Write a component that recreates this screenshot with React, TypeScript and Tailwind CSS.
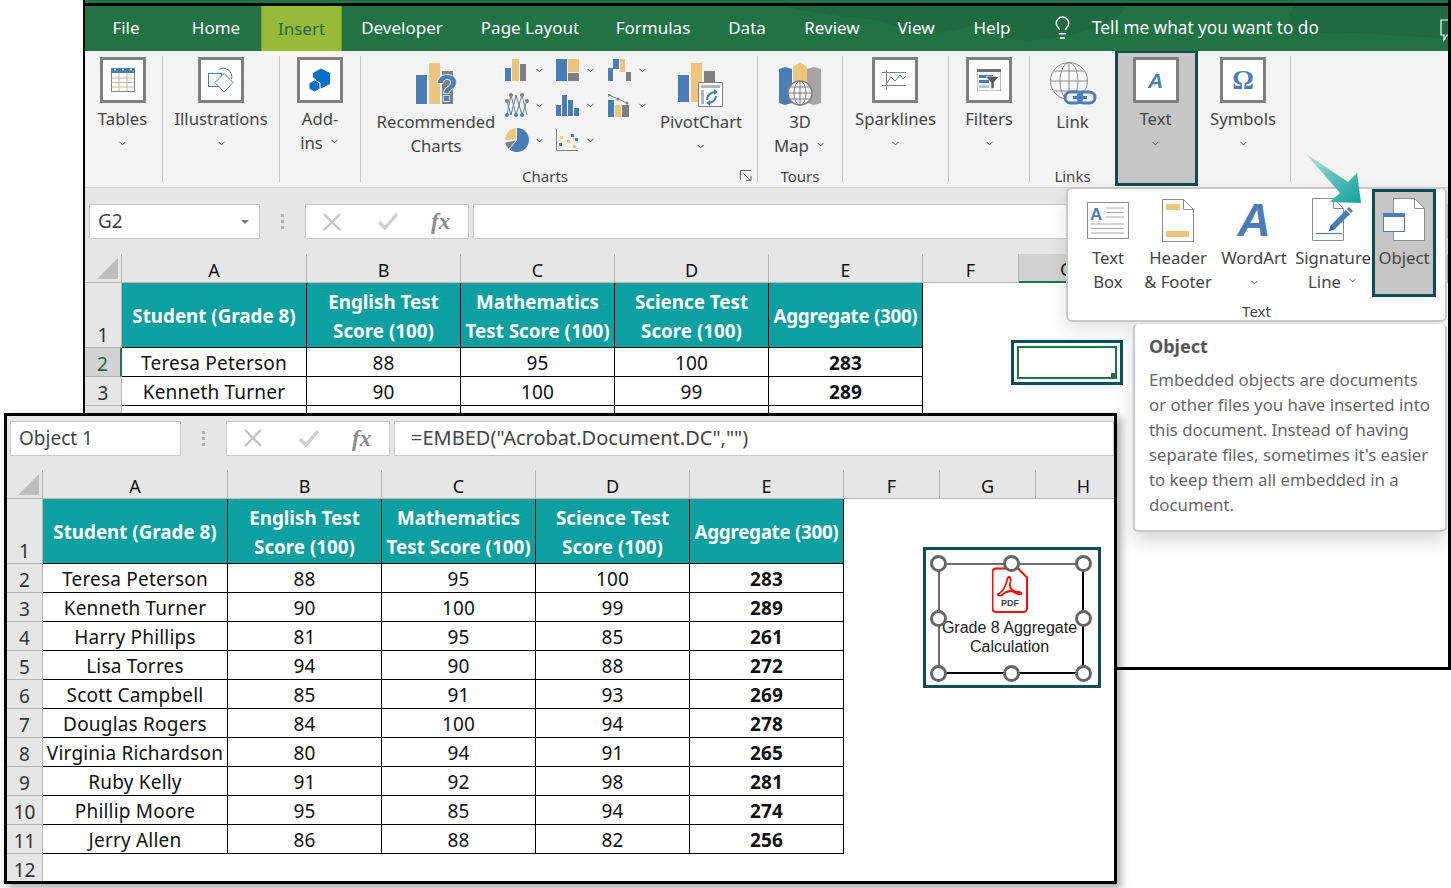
import React from 'react';
import { ChevronDown, Lightbulb } from 'lucide-react';

const BLUE = '#4a7db5';
const TAN = '#ecc57f';
const GREY = '#7f7f7f';

const students = [
  ['Teresa Peterson', '88', '95', '100', '283'],
  ['Kenneth Turner', '90', '100', '99', '289'],
  ['Harry Phillips', '81', '95', '85', '261'],
  ['Lisa Torres', '94', '90', '88', '272'],
  ['Scott Campbell', '85', '91', '93', '269'],
  ['Douglas Rogers', '84', '100', '94', '278'],
  ['Virginia Richardson', '80', '94', '91', '265'],
  ['Ruby Kelly', '91', '92', '98', '281'],
  ['Phillip Moore', '95', '85', '94', '274'],
  ['Jerry Allen', '86', '88', '82', '256'],
];

const blankRow = ['', '', '', '', ''];

const tabs = [
  { label: 'File', cls: 'w-[82px]' },
  { label: 'Home', cls: 'w-[94px] pl-[4px]' },
  { label: 'Insert', cls: 'w-[81px] h-[46px] bg-[#99ba38] border border-[#7f9e35] border-b-0 !text-[#1d6b3d]' },
  { label: 'Developer', cls: 'w-[120px]' },
  { label: 'Page Layout', cls: 'w-[136px]' },
  { label: 'Formulas', cls: 'w-[110px]' },
  { label: 'Data', cls: 'w-[78px]' },
  { label: 'Review', cls: 'w-[92px]' },
  { label: 'View', cls: 'w-[76px]' },
  { label: 'Help', cls: 'w-[76px]' },
];

/* small helpers */
const Chev = ({ className = '' }: { className?: string }) => (
  <ChevronDown size={11} strokeWidth={2} className={`inline-block text-[#444] ${className}`} />
);

const IconBox = ({ children }: { children: React.ReactNode }) => (
  <div className="flex h-[46px] w-[46px] shrink-0 items-center justify-center border-[3px] border-[#808080] bg-white">
    {children}
  </div>
);

const Sep = () => <div className="my-[5px] w-px shrink-0 bg-[#c4c4c4]" />;

const GroupLabel = ({ children, className = '' }: { children: React.ReactNode; className?: string }) => (
  <div className={`mt-auto h-[21px] text-center text-[15px] leading-[20px] text-[#444] ${className}`}>{children}</div>
);

/* icons */
const TableIcon = () => (
  <svg width="26" height="26" viewBox="0 0 26 26">
    <rect x="1.5" y="1.5" width="23" height="23" fill="#fff" stroke="#808080" />
    <rect x="1" y="1" width="24" height="5" fill={BLUE} />
    <path d="M1.5 11h23M1.5 15.500h23M1.500 20h23M9 6v18M17 6v18" stroke="#c4b9a6" strokeWidth="1" />
    <path d="M4 2.500h2M12 2.500h2M20 2.500h2" stroke="#fff" strokeWidth="1.500" />
  </svg>
);

const ShapesIcon = () => (
  <svg width="28" height="28" viewBox="0 0 28 28" fill="none" stroke={BLUE} strokeWidth="1">
    <rect x="1.500" y="7.500" width="13" height="13" fill="#fff" />
    <path d="M12 3.500a8.500 8.500 0 0 1 12.500 9.500" />
    <path d="M17 7.500 26 16.500 17 26 8 16.500z" fill="#fff" />
  </svg>
);

const AddinIcon = () => (
  <svg width="24" height="26" viewBox="0 0 24 26">
    <path d="M13 1.500 22 6v11l-9 4.500-5-2.500V12L5 10.500V6z" fill="#0a6fc9" />
    <path d="M6.500 13 12 16v6l-5.500 3L1 22v-6z" fill="#0a6fc9" stroke="#fff" strokeWidth="1" />
  </svg>
);

const RecommendedIcon = () => (
  <svg className="ml-[5px]" width="46" height="48" viewBox="0 0 46 48">
    <rect x="0" y="13" width="11" height="29" fill={BLUE} />
    <rect x="13" y="1" width="11" height="41" fill={TAN} />
    <rect x="26" y="9" width="11" height="33" fill={GREY} />
    <text x="20" y="39" fontFamily="'Liberation Sans', sans-serif" fontWeight="700" fontSize="36" fill={BLUE} stroke="#f3f3f3" strokeWidth="1.500" paintOrder="stroke">?</text>
  </svg>
);

const ColsIcon = () => (
  <svg width="21" height="22" viewBox="0 0 21 22">
    <rect x="0" y="9" width="6" height="13" fill={BLUE} />
    <rect x="7" y="0" width="7" height="22" fill={TAN} />
    <rect x="15" y="5" width="6" height="17" fill={GREY} />
  </svg>
);
const TreeIcon = () => (
  <svg width="23" height="22" viewBox="0 0 23 22">
    <rect x="0" y="0" width="11" height="22" fill={BLUE} />
    <rect x="12" y="0" width="11" height="13" fill={TAN} />
    <rect x="12" y="14" width="11" height="8" fill={GREY} />
  </svg>
);
const WaterfallIcon = () => (
  <svg width="23" height="22" viewBox="0 0 23 22">
    <path d="M0 9h5V22H0z" fill={BLUE} />
    <rect x="5" y="0" width="6" height="10" fill={BLUE} />
    <rect x="12" y="0" width="5" height="13" fill={TAN} />
    <rect x="18" y="13" width="5" height="9" fill={GREY} />
  </svg>
);
const BoxIcon = () => (
  <svg width="24" height="24" viewBox="0 0 24 24" fill="none">
    <path d="M2 8 6 22 11 2 17 22 22 8" stroke={BLUE} strokeWidth="1" />
    <path d="M2 22 6 2 11 22 17 2 22 22" stroke={GREY} strokeWidth="1" />
    <g fill={BLUE}>
      <circle cx="2" cy="22" r="2" /><circle cx="11" cy="22" r="2" /><circle cx="17" cy="22" r="2" />
    </g>
    <g fill={GREY}>
      <circle cx="2" cy="8" r="2" /><circle cx="6" cy="2" r="2" /><circle cx="17" cy="2" r="2" /><circle cx="22" cy="8" r="2" />
    </g>
  </svg>
);
const HistoIcon = () => (
  <svg width="23" height="21" viewBox="0 0 23 21" fill={BLUE}>
    <rect x="0" y="10" width="5" height="11" />
    <rect x="6" y="0" width="5" height="21" />
    <rect x="12" y="5" width="5" height="16" />
    <rect x="18" y="13" width="5" height="8" />
  </svg>
);
const ComboIcon = () => (
  <svg width="21" height="23" viewBox="0 0 21 23">
    <rect x="0" y="6" width="6" height="17" fill={BLUE} />
    <rect x="7" y="11" width="6" height="12" fill={TAN} />
    <rect x="14" y="11" width="7" height="12" fill={GREY} />
    <path d="M1 1 10 5 19 9" stroke={GREY} strokeWidth="1" fill="none" />
    <circle cx="1" cy="1" r="1.500" fill={GREY} /><circle cx="10" cy="5" r="1.500" fill={GREY} /><circle cx="19" cy="9" r="1.500" fill={GREY} />
  </svg>
);
const PieIcon = () => (
  <svg width="24" height="24" viewBox="0 0 24 24">
    <path d="M12 0a12 12 0 1 1-7.500 21.400L12 12z" fill={BLUE} />
    <path d="M3.800 20.700A12 12 0 0 1 .2 14.500L11 12.500z" fill={GREY} />
    <path d="M0 12A12 12 0 0 1 11 0v11z" fill={TAN} />
  </svg>
);
const ScatterIcon = () => (
  <svg width="22" height="22" viewBox="0 0 22 22">
    <path d="M.5 0v21.500H22" stroke={GREY} fill="none" />
    <g fill={BLUE}><rect x="3" y="14" width="3" height="3" /><rect x="15" y="5" width="3" height="3" /><rect x="19" y="9" width="3" height="3" /></g>
    <g fill={TAN}><rect x="4" y="7" width="3" height="3" /><rect x="11" y="11" width="3" height="3" /><rect x="17" y="16" width="3" height="3" /></g>
  </svg>
);

const PivotChartIcon = () => (
  <svg width="46" height="46" viewBox="0 0 46 46">
    <rect x="0" y="13" width="11" height="27" fill={BLUE} />
    <rect x="13" y="1" width="11" height="39" fill={TAN} />
    <rect x="26" y="9" width="11" height="31" fill={GREY} />
    <rect x="20.500" y="20.500" width="24" height="24" fill="#fff" stroke={GREY} />
    <rect x="23" y="23" width="19" height="3" fill="#b5b5b5" />
    <rect x="23" y="28" width="3" height="14" fill="#b5b5b5" />
    <path d="M29 38c0-5 4-8 9-8M38 34c0 4-4 7-8 7" stroke={BLUE} strokeWidth="2" fill="none" />
    <path d="M36 27l4 3-4 3zM32 38l-4 3 4 3z" fill={BLUE} />
  </svg>
);

const MapIcon = () => (
  <svg width="42" height="44" viewBox="0 0 42 44">
    <path d="M0 7 6 5 13 7V41L6 43 0 41z" fill={BLUE} />
    <path d="M14 5 21 0 28 5V32H14z" fill={TAN} />
    <path d="M28 7 35 5 42 7V41L35 43 28 41z" fill="#a5a5a5" />
    <circle cx="21" cy="31" r="12" fill="#f3f3f3" stroke={GREY} strokeWidth="1.500" />
    <path d="M9 31h24M11 25h20M11 37h20M21 19v24" stroke={GREY} />
    <ellipse cx="21" cy="31" rx="6" ry="12" fill="none" stroke={GREY} />
  </svg>
);

const SparkIcon = () => (
  <svg width="26" height="20" viewBox="0 0 26 20" fill="none">
    <path d="M0 2.500h24M0 15.500h24M4.500 0v20" stroke="#7f7f7f" />
    <path d="M5 13 9 7 13 11 18 5 21 9 24 6" stroke={BLUE} />
  </svg>
);

const FilterIcon = () => (
  <svg width="24" height="22" viewBox="0 0 24 22">
    <rect x="0" y="0" width="24" height="22" fill="#fff" stroke="#808080" />
    <rect x="0" y="0" width="24" height="3" fill="#6f6f6f" />
    <rect x="2" y="6" width="14" height="3" fill={BLUE} />
    <rect x="2" y="11" width="10" height="3" fill={BLUE} />
    <rect x="2" y="16" width="10" height="3" fill="#b5c8e0" />
    <path d="M9 7.500h13l-5 6v6h-3v-6z" fill="#595959" stroke="#fff" strokeWidth=".5" />
  </svg>
);

const LinkIcon = () => (
  <svg width="48" height="46" viewBox="0 0 48 46" fill="none">
    <circle cx="20" cy="20" r="18.500" stroke="#8c8c8c" fill="#f7f7f7" />
    <ellipse cx="20" cy="20" rx="9" ry="18.500" stroke="#8c8c8c" />
    <path d="M20 1.500v37M2 20h36M5 10h30M5 30h30" stroke="#8c8c8c" />
    <rect x="16" y="31" width="17" height="11" rx="5.500" stroke={BLUE} strokeWidth="3" fill="#f3f3f3" />
    <rect x="29" y="31" width="17" height="11" rx="5.500" stroke={BLUE} strokeWidth="3" fill="none" />
    <path d="M24 36.500h14" stroke={BLUE} strokeWidth="3" />
  </svg>
);

const OmegaIcon = () => (
  <span className="font-['Liberation_Serif',serif] text-[27px] font-bold leading-none text-[#4a7db5]">Ω</span>
);

const TextBoxIcon = () => (
  <svg width="42" height="37" viewBox="0 0 42 37">
    <rect x=".5" y=".5" width="41" height="36" fill="#fff" stroke="#8c8c8c" />
    <text x="3" y="18" fontFamily="'Liberation Sans', sans-serif" fontWeight="700" fontSize="17" fill={BLUE}>A</text>
    <path d="M19 6h18M19 10.500h18M19 15h18M4 22h33M4 26.500h33M4 31h33" stroke="#a8a8a8" />
  </svg>
);

const HeaderFooterIcon = () => (
  <svg width="32" height="43" viewBox="0 0 32 43">
    <path d="M.5.5h21l10 10v32H.5z" fill="#fff" stroke="#8c8c8c" />
    <path d="M21.500.5v10h10" fill="none" stroke="#8c8c8c" />
    <rect x="4" y="5" width="14" height="6" fill={TAN} />
    <rect x="4" y="32" width="23" height="6" fill={TAN} />
  </svg>
);

const SignatureIcon = () => (
  <svg width="42" height="44" viewBox="0 0 42 44">
    <path d="M.5.5h21l10 10v32H.5z" fill="#fff" stroke="#8c8c8c" />
    <path d="M21.500.5v10h10" fill="none" stroke="#8c8c8c" />
    <path d="M4 35.500h26" stroke={BLUE} strokeWidth="1.200" />
    <path d="M17 33 19 27 34 12 38 16 23 31z" fill={BLUE} />
    <path d="M35 11 37 9 41 13 39 15z" fill={BLUE} />
    <path d="M17 33 19 27 23 31z" fill="#2f5f94" />
  </svg>
);

const ObjectIcon = () => (
  <svg width="42" height="44" viewBox="0 0 42 44">
    <path d="M10.500.5h21l10 10v32h-31z" fill="#fff" stroke="#8c8c8c" />
    <path d="M31.500.5v10h10" fill="none" stroke="#8c8c8c" />
    <rect x=".5" y="15.500" width="21" height="18" fill="#fff" stroke={BLUE} />
    <rect x="0" y="15" width="22" height="4" fill={BLUE} />
  </svg>
);

const PdfIcon = () => (
  <svg width="36" height="46" viewBox="0 0 36 46">
    <path d="M4 1h22l9 9v31a3.500 3.500 0 0 1-3.500 3.500H4A3.500 3.500 0 0 1 .5 41V4.500A3.500 3.500 0 0 1 4 1z" fill="#fff" stroke="#f40f02" strokeWidth="2" transform="translate(0 .5)" />
    <path d="M6 27c3-1 6-5 8-10 1-3 1-7 3-7s2 4 1 7c-1 4 3 8 8 8 3 0 4 1 3 2-2 1-6-1-9-3-4 0-8 2-10 4-2 1-5 1-4-1z" fill="none" stroke="#f40f02" strokeWidth="1.800" />
    <text x="18" y="39" textAnchor="middle" fontFamily="'Liberation Sans', sans-serif" fontWeight="700" fontSize="9" fill="#444">PDF</text>
  </svg>
);

const Handle = ({ className }: { className: string }) => (
  <div className={`absolute h-[17px] w-[17px] rounded-full border-[3px] border-[#666] bg-white ${className}`} />
);

/* ribbon pieces */
const Stacked = ({ lines, chev, className = '' }: { lines: string[]; chev?: 'below' | 'inline'; className?: string }) => (
  <div className={`text-center text-[16.700px] leading-[24px] text-[#444] ${className}`}>
    {lines.map((l, i) => (
      <div key={l} className="whitespace-nowrap">
        {l}
        {chev === 'inline' && i === lines.length - 1 && <Chev className="ml-[6px] align-[2px]" />}
      </div>
    ))}
    {chev === 'below' && (
      <div className="flex h-[24px] items-center justify-center">
        <Chev />
      </div>
    )}
  </div>
);

const BoxButton = ({ icon, lines, chev = 'below' }: { icon: React.ReactNode; lines: string[]; chev?: 'below' | 'inline' }) => (
  <div className="flex flex-col items-center pt-[6px]">
    <IconBox>{icon}</IconBox>
    <Stacked lines={lines} chev={chev} className="mt-[4px]" />
  </div>
);

const GalleryCell = ({ icon }: { icon: React.ReactNode }) => (
  <div className="flex h-[34px] items-center">
    <div className="flex w-[29px] justify-start">{icon}</div>
    <Chev />
  </div>
);

const Ribbon = () => (
  <div className="flex h-[137px] shrink-0 border-b border-[#d2d2d2] bg-[#f3f3f3]">
    <div className="flex w-[77px] shrink-0 justify-center pr-[2px]"><BoxButton icon={<TableIcon />} lines={['Tables']} /></div>
    <Sep />
    <div className="flex w-[116px] shrink-0 justify-center"><BoxButton icon={<ShapesIcon />} lines={['Illustrations']} /></div>
    <Sep />
    <div className="flex w-[80px] shrink-0 justify-center"><BoxButton icon={<AddinIcon />} lines={['Add-', 'ins']} chev="inline" /></div>
    <Sep />
    {/* charts group */}
    <div className="relative flex w-[396px] shrink-0 flex-col">
      <div className="flex">
        <div className="flex w-[144px] shrink-0 flex-col items-center pt-[11px] pl-[6px]">
          <RecommendedIcon />
          <Stacked lines={['Recommended', 'Charts']} />
        </div>
        <div className="grid w-[154px] shrink-0 grid-cols-3 pt-[2px]">
          <GalleryCell icon={<ColsIcon />} />
          <GalleryCell icon={<TreeIcon />} />
          <GalleryCell icon={<WaterfallIcon />} />
          <GalleryCell icon={<BoxIcon />} />
          <GalleryCell icon={<HistoIcon />} />
          <GalleryCell icon={<ComboIcon />} />
          <GalleryCell icon={<PieIcon />} />
          <GalleryCell icon={<ScatterIcon />} />
        </div>
        <div className="flex flex-1 flex-col items-center pt-[11px] pr-[14px]">
          <PivotChartIcon />
          <Stacked lines={['PivotChart']} chev="below" className="mt-[2px]" />
        </div>
      </div>
      <GroupLabel className="pr-[28px]">Charts</GroupLabel>
      <svg className="absolute right-[5px] bottom-[6px]" width="12" height="11" viewBox="0 0 12 11" fill="none" stroke="#666">
        <path d="M.5 10V.5H11M3 3l7 7M6 10.500h5V6" />
      </svg>
    </div>
    <Sep />
    <div className="flex w-[84px] shrink-0 flex-col items-center pt-[11px]">
      <MapIcon />
      <Stacked lines={['3D', 'Map']} chev="inline" className="mt-[4px]" />
      <GroupLabel>Tours</GroupLabel>
    </div>
    <Sep />
    <div className="flex w-[105px] shrink-0 justify-center"><BoxButton icon={<SparkIcon />} lines={['Sparklines']} /></div>
    <Sep />
    <div className="flex w-[80px] shrink-0 justify-center"><BoxButton icon={<FilterIcon />} lines={['Filters']} /></div>
    <Sep />
    <div className="flex w-[85px] shrink-0 flex-col items-center pt-[10px]">
      <LinkIcon />
      <Stacked lines={['Link']} className="mt-[3px]" />
      <GroupLabel>Links</GroupLabel>
    </div>
    <div className="flex h-[135px] w-[83px] shrink-0 justify-center border-[3px] border-t-[2px] border-[#0f4c54] bg-[#c6c6c6] pr-[2px]">
      <div className="-mt-[2px]">
        <BoxButton icon={<span className="font-['Liberation_Sans',sans-serif] text-[21px] font-bold italic leading-none text-[#4a7db5]">A</span>} lines={['Text']} />
      </div>
    </div>
    <div className="flex w-[92px] shrink-0 justify-center pr-[2px]"><BoxButton icon={<OmegaIcon />} lines={['Symbols']} /></div>
    <Sep />
  </div>
);

const TabBar = () => (
  <div className="relative flex h-[45px] shrink-0 items-start overflow-hidden bg-[#217346] font-['Noto_Sans',sans-serif]">
    <svg className="absolute inset-0" width="1363" height="45" viewBox="0 0 1363 45" fill="#1f6a40">
      <path d="M700 0c40 12 90 10 110 20 30 12 60 6 80-2 30 14 40 22 90 12 40-10 60-20 60-30zM1210 0c-12 15-6 28 2 30 40-8 80 0 150 2V0z" />
    </svg>
    {tabs.map((t) => (
      <div key={t.label} className={`relative -mt-[1px] flex h-[45px] shrink-0 items-center justify-center text-[17px] text-white ${t.cls}`}>
        {t.label}
      </div>
    ))}
    <div className="relative -mt-[1px] flex h-[45px] items-center gap-[17px] pl-[20px] text-[17.200px] text-white">
      <Lightbulb size={25} strokeWidth={1.400} />
      <span>Tell me what you want to do</span>
    </div>
    <svg className="absolute top-[13px] right-0" width="8" height="23" viewBox="0 0 8 23" fill="none" stroke="#fff" strokeWidth="1.200">
      <path d="M8 1H1v15h3v5l3-5h1" />
    </svg>
  </div>
);

const FormulaBar = ({ name, formula, arrow, pad }: { name: string; formula?: string; arrow?: boolean; pad: string }) => (
  <div className={`flex h-full shrink-0 items-center bg-[#e6e6e6] ${pad}`}>
    <div className="flex h-[35px] w-[171px] shrink-0 items-center justify-between border border-[#c6c6c6] bg-white px-[8px] text-[19px] text-[#444]">
      <span>{name}</span>
      {arrow && <div className="mr-[2px] h-0 w-0 border-x-[4px] border-t-[4px] border-x-transparent border-t-[#777]" />}
    </div>
    <div className="flex w-[45px] shrink-0 flex-col items-center gap-[3px]">
      <div className="h-[3px] w-[3px] bg-[#b0b0b0]" />
      <div className="h-[3px] w-[3px] bg-[#b0b0b0]" />
      <div className="h-[3px] w-[3px] bg-[#b0b0b0]" />
    </div>
    <div className="flex h-[35px] w-[164px] shrink-0 items-center border border-[#c6c6c6] bg-white text-[#b4b4b4]">
      <svg className="ml-[17px]" width="18" height="18" viewBox="0 0 18 18" fill="none" stroke="#c4c4c4" strokeWidth="2.400"><path d="M1 1l16 16M17 1 1 17" /></svg>
      <svg className="ml-[37px]" width="20" height="17" viewBox="0 0 20 17" fill="none" stroke="#d0d0d0" strokeWidth="3.400"><path d="M1 9l6 6L19 1" /></svg>
      <span className="ml-[33px] font-['Liberation_Serif',serif] text-[23px] font-bold italic leading-none text-[#8c8c8c]">fx</span>
    </div>
    <div className="ml-[4px] flex h-[35px] min-w-0 flex-1 items-center border border-[#c6c6c6] bg-white pl-[16px] text-[20px] whitespace-nowrap text-[#444]">
      {formula}
    </div>
  </div>
);

const ColHead = ({ label, active }: { label: string; active?: boolean }) => (
  <div className={`flex h-[29px] items-end justify-center border-r border-b border-[#b4b4b4] text-[18px] leading-[24px] text-[#111] ${active ? 'border-b-2 border-b-[#217346] bg-[#d2d2d2]' : 'bg-[#e6e6e6]'}`}>
    {label}
  </div>
);

const RowHead = ({ n, active, tall }: { n?: number; active?: boolean; tall?: boolean }) => (
  <div className={`flex items-end justify-center border-r border-b border-[#b4b4b4] text-[19px] leading-[23px] ${tall ? 'h-[65px]' : 'h-[29px]'} ${active ? 'border-r-2 border-r-[#217346] bg-[#d2d2d2] text-[#1d6b3d]' : 'bg-[#e6e6e6] text-[#333]'}`}>
    {n}
  </div>
);

const HeadCell = ({ lines, className = '' }: { lines: string[]; className?: string }) => (
  <div className={`flex h-[65px] flex-col items-center justify-center border-r border-b border-black bg-[#0ca0a0] pt-[3px] text-[18.800px] font-bold leading-[29px] whitespace-nowrap text-white ${className}`}>
    {lines.map((l) => (
      <div key={l}>{l}</div>
    ))}
  </div>
);

const Sheet = ({ cols, rows, letters, activeCol, activeRow, extraRow }: { cols: string; rows: string[][]; letters: string[]; activeCol?: string; activeRow?: number; extraRow?: boolean }) => (
  <div className={`grid ${cols} font-['Noto_Sans',sans-serif]`}>
    <div className="relative h-[29px] border-r border-b border-[#b4b4b4] bg-[#e6e6e6]">
      <div className="absolute right-[3px] bottom-[3px] h-0 w-0 border-b-[21px] border-l-[21px] border-b-[#bdbdbd] border-l-transparent" />
    </div>
    {letters.map((c, i) => (
      <ColHead key={i} label={c} active={c === activeCol} />
    ))}

    <RowHead n={1} tall />
    <HeadCell lines={['Student (Grade 8)']} />
    <HeadCell lines={['English Test', 'Score (100)']} />
    <HeadCell lines={['Mathematics', 'Test Score (100)']} />
    <HeadCell lines={['Science Test', 'Score (100)']} />
    <HeadCell lines={['Aggregate (300)']} className="tracking-[-0.3px]" />
    <div className="col-span-3 bg-white" />

    {rows.map((r, i) => (
      <React.Fragment key={i}>
        <RowHead n={r[0] ? i + 2 : undefined} active={activeRow === i + 2} />
        {r.map((v, j) => (
          <div key={j} className={`flex h-[29px] items-center justify-center border-r border-b border-black bg-white pt-[3px] text-[19px] tracking-[0.2px] whitespace-nowrap text-[#111] ${j === 4 ? 'font-bold' : ''}`}>
            {v}
          </div>
        ))}
        <div className="col-span-3 bg-white" />
      </React.Fragment>
    ))}
    {extraRow && (
      <>
        <RowHead n={rows.length + 2} />
        <div className="col-span-8 bg-white" />
      </>
    )}
  </div>
);

const DropItem = ({ icon, lines, chev, w, active }: { icon: React.ReactNode; lines: string[]; chev?: 'below' | 'inline'; w: string; active?: boolean }) => (
  <div className={`flex shrink-0 flex-col items-center ${w} ${active ? 'h-[108px] border-[3px] border-[#0f4c54] bg-[#c6c6c6]' : 'pt-[3px]'}`}>
    <div className="mt-[6px] flex h-[44px] items-center justify-center">{icon}</div>
    <Stacked lines={lines} chev={chev} className="mt-[4px]" />
  </div>
);

const TextDropdown = () => (
  <div className="absolute top-[187px] left-[1066px] flex h-[135px] w-[381px] flex-col rounded-[6px] border-2 border-[#c8c8c8] bg-white pl-[6px] font-['Noto_Sans',sans-serif] shadow-[0_8px_18px_rgba(0,0,0,0.12)]">
    <div className="flex">
      <DropItem w="w-[68px]" icon={<TextBoxIcon />} lines={['Text', 'Box']} />
      <DropItem w="w-[72px]" icon={<HeaderFooterIcon />} lines={['Header', '& Footer']} />
      <DropItem w="w-[80px]" icon={<span className="font-['Liberation_Sans',sans-serif] text-[46px] font-bold italic leading-[44px] text-[#4a7db5]">A</span>} lines={['WordArt']} chev="below" />
      <DropItem w="w-[78px]" icon={<SignatureIcon />} lines={['Signature', 'Line']} chev="inline" />
      <DropItem w="w-[64px]" icon={<ObjectIcon />} lines={['Object']} active />
    </div>
    <GroupLabel className="!h-[19px] pr-[6px]">Text</GroupLabel>
  </div>
);

const Tooltip = () => (
  <div className="absolute top-[324px] left-[1133px] h-[208px] w-[314px] rounded-[5px] border-2 border-[#c8c8c8] border-t-0 bg-white pt-[10px] pl-[14px] font-['Noto_Sans',sans-serif] text-[#666] shadow-[0_10px_18px_rgba(0,0,0,0.15)]">
    <div className="text-[18px] font-bold leading-[25px] text-[#555]">Object</div>
    <div className="mt-[8px] text-[16.800px] leading-[25px] whitespace-nowrap">
      <div>Embedded objects are documents</div>
      <div>or other files you have inserted into</div>
      <div>this document. Instead of having</div>
      <div>separate files, sometimes it's easier</div>
      <div>to keep them all embedded in a</div>
      <div>document.</div>
    </div>
  </div>
);

export default function App() {
  return (
    <div className="relative h-[888px] w-[1451px] overflow-hidden bg-white font-['Noto_Sans',sans-serif]">
      {/* back window, Insert tab */}
      <div className="absolute top-0 left-[83px] flex h-[670px] w-[1368px] flex-col overflow-hidden border-r-[3px] border-b-[3px] border-l-2 border-black bg-white">
        <div className="h-[3px] shrink-0 bg-[#217346]" />
        <div className="h-[3px] shrink-0 bg-black" />
        <TabBar />
        <Ribbon />
        <div className="h-[66px] shrink-0">
          <FormulaBar name="G2" arrow pad="pl-[4px] pt-[1px]" />
        </div>
        <Sheet
          cols="grid-cols-[37px_185px_154px_154px_154px_154px_96px_96px_1fr]"
          letters={['A', 'B', 'C', 'D', 'E', 'F', 'G', '']}
          rows={[...students.slice(0, 2), blankRow]}
          activeCol="G"
          activeRow={2}
        />
      </div>

      {/* G2 selection with callout */}
      <div className="absolute top-[340px] left-[1011px] h-[45px] w-[112px] border-[3px] border-[#0f4c54] bg-white p-[3px]">
        <div className="relative h-full w-full border-2 border-[#217346]">
          <div className="absolute -right-[2px] -bottom-[2px] h-[6px] w-[6px] bg-[#217346]" />
        </div>
      </div>

      <TextDropdown />
      <Tooltip />

      {/* teal pointer */}
      <svg className="absolute top-[150px] left-[1300px]" width="66" height="60" viewBox="0 0 66 60">
        <defs>
          <linearGradient id="arrowFill" x1="0" y1="0" x2="1" y2="1">
            <stop offset="0" stopColor="#bfe8e3" />
            <stop offset="0.500" stopColor="#5dbdb7" />
            <stop offset="1" stopColor="#0ea39e" />
          </linearGradient>
        </defs>
        <path d="M5 3 48 32 57 23 61 53 30 52 40 43z" fill="url(#arrowFill)" />
      </svg>

      {/* front window, embedded object */}
      <div className="absolute top-[413px] left-[4px] flex h-[471px] w-[1113px] flex-col overflow-hidden border-[3px] border-black bg-white shadow-[4px_4px_8px_rgba(0,0,0,0.35)]">
        <div className="h-[54px] shrink-0">
          <FormulaBar name="Object 1" formula={'=EMBED("Acrobat.Document.DC","")'} pad="pl-[3px] pb-[10px]" />
        </div>
        <Sheet
          cols="grid-cols-[36px_185px_154px_154px_154px_154px_96px_96px_96px]"
          letters={['A', 'B', 'C', 'D', 'E', 'F', 'G', 'H']}
          rows={students}
          extraRow
        />
      </div>

      {/* embedded PDF object */}
      <div className="absolute top-[547px] left-[923px] h-[141px] w-[178px] border-[3px] border-[#0f4c54] bg-white">
        <div className="relative mt-[13px] ml-[12px] flex h-[111px] w-[146px] flex-col items-center border-2 border-black border-t-[#6e6e6e] border-l-[#6e6e6e]">
          <div className="mt-[2px] -ml-[2px]"><PdfIcon /></div>
          <div className="mt-[5px] -ml-[3px] text-center font-['Liberation_Sans',sans-serif] text-[16px] leading-[19px] whitespace-nowrap text-[#222]">
            <div>Grade 8 Aggregate</div>
            <div>Calculation</div>
          </div>
          <Handle className="-top-[10px] -left-[10px]" />
          <Handle className="-top-[10px] left-[63px]" />
          <Handle className="-top-[10px] -right-[10px]" />
          <Handle className="top-[45px] -left-[10px]" />
          <Handle className="top-[45px] -right-[10px]" />
          <Handle className="-bottom-[10px] -left-[10px]" />
          <Handle className="-bottom-[10px] left-[63px]" />
          <Handle className="-right-[10px] -bottom-[10px]" />
        </div>
      </div>
    </div>
  );
}
